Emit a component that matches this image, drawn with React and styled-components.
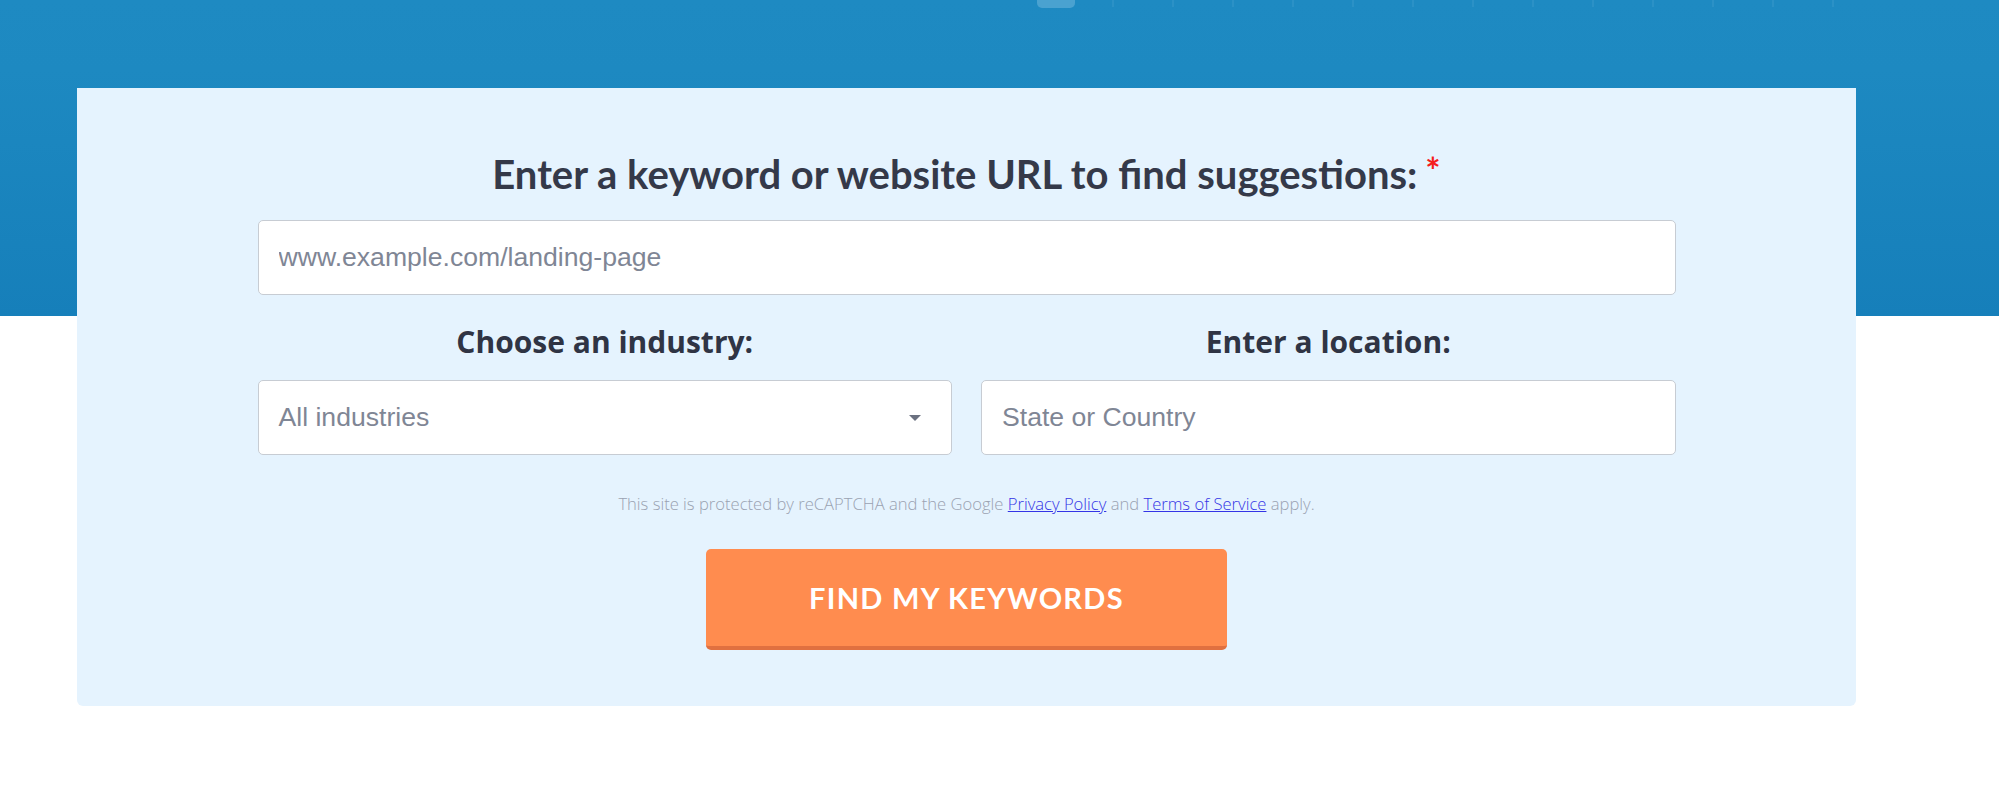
import styled, { createGlobalStyle } from "styled-components";

const GlobalStyle = createGlobalStyle`
  html, body {
    margin: 0;
    padding: 0;
    background: #ffffff;
  }
  * {
    box-sizing: border-box;
  }
`;

const TICK_COUNT = 13;

const App = () => {
  return (
    <Page>
      <GlobalStyle />
      <TopStrip>
        <ActiveTab />
        <Ticks>
          {Array.from({ length: TICK_COUNT }).map((_, i) => (
            <Tick key={i} />
          ))}
        </Ticks>
      </TopStrip>
      <Card>
        <Heading>
          Enter a keyword or website URL to find suggestions:
          <Required>*</Required>
        </Heading>
        <TextInput placeholder="www.example.com/landing-page" />
        <FieldRow>
          <Field>
            <Label>Choose an industry:</Label>
            <SelectBox>
              <SelectValue>All industries</SelectValue>
              <Caret />
            </SelectBox>
          </Field>
          <Field>
            <Label>Enter a location:</Label>
            <TextInput placeholder="State or Country" />
          </Field>
        </FieldRow>
        <Notice>
          This site is protected by reCAPTCHA and the Google{" "}
          <NoticeLink href="#">Privacy Policy</NoticeLink> and{" "}
          <NoticeLink href="#">Terms of Service</NoticeLink> apply.
        </Notice>
        <SubmitButton type="button">FIND MY KEYWORDS</SubmitButton>
      </Card>
    </Page>
  );
};

const Page = styled.div`
  min-height: 802px;
  background: linear-gradient(
    180deg,
    #1e8ac2 0px,
    #1d89c1 70px,
    #167fba 316px,
    #ffffff 316px
  );
  overflow: hidden;
`;

const TopStrip = styled.div`
  display: flex;
  align-items: flex-start;
  height: 8px;
  padding-left: 1037px;
`;

const ActiveTab = styled.div`
  width: 38px;
  height: 8px;
  background: #4aa2d0;
  border-radius: 0 0 5px 5px;
`;

const Ticks = styled.div`
  display: flex;
  gap: 58px;
  margin-left: 37px;
`;

const Tick = styled.span`
  display: block;
  width: 2px;
  height: 7px;
  background: #2b91c6;
`;

const Card = styled.div`
  width: 1779px;
  margin: 80px 0 0 77px;
  background: #e5f3fe;
  border-radius: 0 0 6px 6px;
  padding: 62px 0 56px;
  display: flex;
  flex-direction: column;
  align-items: center;

  & > input {
    width: 1418px;
  }
`;

const Heading = styled.h1`
  margin: 0 0 22px;
  font-family: Lato, "Liberation Sans", sans-serif;
  font-weight: 700;
  font-size: 40px;
  line-height: 1.2;
  color: #343949;
  text-align: center;
`;

const Required = styled.span`
  color: #f51d1d;
  font-size: 36px;
  margin-left: 8px;
  vertical-align: top;
  position: relative;
  top: -1px;
`;

const TextInput = styled.input`
  width: 100%;
  height: 75px;
  padding: 0 20px;
  border: 1px solid #c7ccd3;
  border-radius: 5px;
  background: #ffffff;
  font-family: "Liberation Sans", Arial, sans-serif;
  font-size: 26.6px;
  color: #343949;
  outline: none;

  &::placeholder {
    color: #7f8695;
  }
`;

const FieldRow = styled.div`
  width: 1418px;
  margin-top: 29px;
  display: grid;
  grid-template-columns: 1fr 1fr;
  column-gap: 29px;
`;

const Field = styled.div`
  display: flex;
  flex-direction: column;
  align-items: center;
`;

const Label = styled.div`
  font-family: "Open Sans", "Noto Sans", sans-serif;
  font-weight: 700;
  font-size: 30px;
  line-height: 1.2;
  color: #2f3444;
  margin-bottom: 20px;
`;

const SelectBox = styled.div`
  width: 100%;
  height: 75px;
  padding: 0 30px 0 20px;
  border: 1px solid #c7ccd3;
  border-radius: 5px;
  background: #ffffff;
  display: flex;
  align-items: center;
  justify-content: space-between;
`;

const SelectValue = styled.span`
  font-family: "Liberation Sans", Arial, sans-serif;
  font-size: 26.6px;
  color: #7f8695;
`;

const Caret = styled.span`
  width: 0;
  height: 0;
  border-left: 6px solid transparent;
  border-right: 6px solid transparent;
  border-top: 6px solid #6b7180;
`;

const Notice = styled.p`
  margin: 37px 0 0;
  font-family: "Open Sans", "Noto Sans", sans-serif;
  font-weight: 300;
  font-size: 16.6px;
  line-height: 1.5;
  color: #9aa2b1;
`;

const NoticeLink = styled.a`
  color: #3434e6;
  text-decoration: underline;
`;

const SubmitButton = styled.button`
  margin-top: 32px;
  width: 521px;
  height: 101px;
  border: none;
  border-bottom: 4px solid #e07040;
  border-radius: 5px;
  background: #ff8c4f;
  color: #ffffff;
  font-family: Lato, "Liberation Sans", sans-serif;
  font-weight: 700;
  font-size: 29px;
  letter-spacing: 1.3px;
  cursor: pointer;
`;

export default App;
